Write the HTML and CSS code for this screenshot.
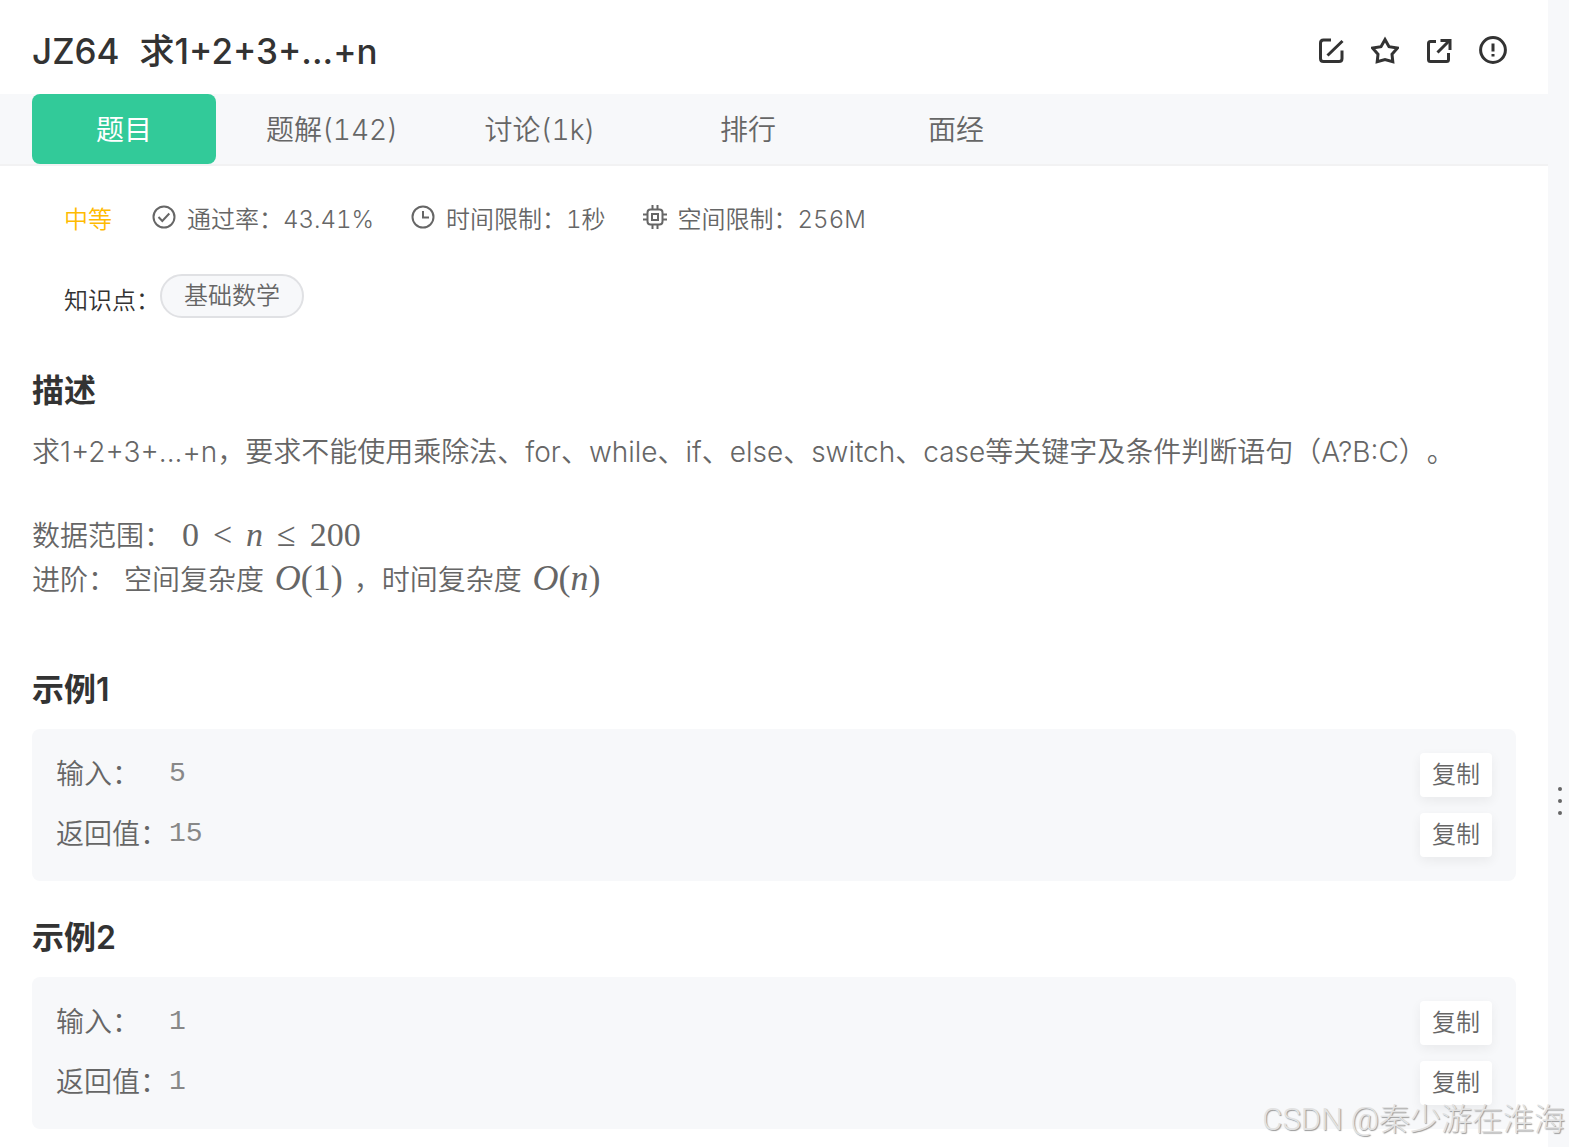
FILE: index.html
```html
<!DOCTYPE html>
<html lang="zh-CN">
<head>
<meta charset="utf-8">
<meta name="viewport" content="width=device-width, initial-scale=1">
<title>JZ64 求1+2+3+...+n</title>
<link rel="stylesheet" href="styles.css">
</head>
<body>
<div class="layout">
  <main class="panel">
    <header class="header">
      <h1 class="title"><span>JZ64</span><span>求1+2+3+...+n</span></h1>
      <div class="actions">
        <button class="action" type="button" aria-label="编辑">
          <svg viewBox="0 0 28 28"><path d="M14 4H6.500Q3.500 4 3.500 7v15.500q0 3 3 3H22q3 0 3-3V14.500M10.500 19.500L25.500 5"/></svg>
        </button>
        <button class="action" type="button" aria-label="收藏">
          <svg viewBox="0 0 28 28"><path d="M14 3.500l4 7.200 8.300 1.400-5.300 6.200 .8 7.500-7.800-2.300-7.800 2.300 .8-7.500-5.300-6.200L10 10.700z"/></svg>
        </button>
        <button class="action" type="button" aria-label="分享">
          <svg viewBox="0 0 28 28"><path d="M11 5.500H5.500Q3.500 5.500 3.500 7.500V23.500q0 2 2 2H21.500q2 0 2-2v-6.500M12.500 16.500L24 5"/><path d="M15.500 4.500H25V14"/></svg>
        </button>
        <button class="action" type="button" aria-label="反馈">
          <svg viewBox="0 0 28 28"><circle cx="14" cy="14" r="12.400"/><path d="M14 7.500v8M14 18v2.500"/></svg>
        </button>
      </div>
    </header>
    <nav class="tabs">
      <a class="tab tab-active" href="#problem">题目</a>
      <a class="tab" href="#solutions">题解(142)</a>
      <a class="tab" href="#discuss">讨论(1k)</a>
      <a class="tab" href="#rank">排行</a>
      <a class="tab" href="#interview">面经</a>
    </nav>
    <div class="meta">
      <span class="level">中等</span>
      <span class="meta-item"><svg viewBox="0 0 24 24"><circle cx="12" cy="12" r="10.500"/><path d="M6.500 12l3.800 4 7-7.500"/></svg>通过率：43.41%</span>
      <span class="meta-item"><svg viewBox="0 0 24 24"><circle cx="12" cy="12" r="10.500"/><path d="M12 6v6.500h6"/></svg>时间限制：1秒</span>
      <span class="meta-item"><svg viewBox="0 0 24 24"><rect x="4.500" y="4.500" width="15" height="15" rx="3"/><rect x="9" y="9" width="6" height="6"/><path d="M9.500 0v4M14.500 0v4M9.500 20v4M14.500 20v4M0 9.500h4M0 14.500h4M20 9.500h4M20 14.500h4"/></svg>空间限制：256M</span>
    </div>
    <div class="topics">
      <span>知识点：</span>
      <a class="tag" href="#math">基础数学</a>
    </div>
    <section class="section">
      <h2 class="heading">描述</h2>
      <div class="prose">
        <p>求1+2+3+...+n，要求不能使用乘除法、for、while、if、else、switch、case等关键字及条件判断语句（A?B:C）。</p>
        <p class="range">数据范围： <span class="formula"><span>0</span><span>&lt;</span><i>n</i><span>≤</span><span>200</span></span></p>
        <p class="range">进阶： 空间复杂度 <span class="math"><i>O</i>(1)</span> ，时间复杂度 <span class="math"><i>O</i>(<i>n</i>)</span></p>
      </div>
    </section>
    <section class="section">
      <h2 class="heading">示例1</h2>
      <div class="sample">
        <div class="row"><span class="label">输入：</span><code class="value">5</code><button class="copy" type="button">复制</button></div>
        <div class="row"><span class="label">返回值：</span><code class="value">15</code><button class="copy" type="button">复制</button></div>
      </div>
    </section>
    <section class="section">
      <h2 class="heading">示例2</h2>
      <div class="sample">
        <div class="row"><span class="label">输入：</span><code class="value">1</code><button class="copy" type="button">复制</button></div>
        <div class="row"><span class="label">返回值：</span><code class="value">1</code><button class="copy" type="button">复制</button></div>
      </div>
    </section>
  </main>
  <aside class="gutter"><span class="dot"></span><span class="dot"></span><span class="dot"></span></aside>
  <div class="watermark">CSDN @秦少游在淮海</div>
</div>
</body>
</html>
```
FILE: styles.css
```css
* {
  box-sizing: border-box;
}

body {
  margin: 0;
  background: #fff;
  color: #666;
  font-family: Inter, "Noto Sans CJK SC", sans-serif;
  font-weight: 350;
  font-size: 28px;
  text-spacing-trim: space-all;
}

h1, h2, p {
  margin: 0;
}

a {
  color: inherit;
  text-decoration: none;
}

button {
  padding: 0;
  border: 0;
  font: inherit;
  color: inherit;
  cursor: pointer;
}

svg {
  display: block;
  fill: none;
  stroke: currentColor;
  stroke-width: 2;
}

.layout {
  position: relative;
  display: flex;
  min-height: 100vh;
}

.panel {
  flex: 1;
  min-width: 0;
}

.header {
  display: flex;
  align-items: center;
  justify-content: space-between;
  height: 94px;
  padding: 8px 41px 0 32px;
  color: #333;
}

.title {
  display: flex;
  gap: 20px;
  font-size: 35px;
  font-weight: 500;
  line-height: 48px;
}

.actions {
  display: flex;
  gap: 26px;
  padding-bottom: 2px;
}

.action {
  width: 28px;
  height: 28px;
  background: none;
}

.action svg {
  stroke-width: 3;
}

.tabs {
  display: flex;
  gap: 24px;
  padding: 0 32px;
  background: #f7f8fa;
  border-bottom: 2px solid #f2f2f3;
  font-variant-numeric: tabular-nums;
}

.tab {
  width: 184px;
  height: 70px;
  border-radius: 8px;
  line-height: 72px;
  text-align: center;
}

.tab-active {
  background: #32ca99;
  color: #fff;
  font-weight: 400;
}

.meta {
  display: flex;
  align-items: center;
  gap: 37px;
  padding: 36px 64px 0;
  font-size: 24px;
  font-variant-numeric: tabular-nums;
  line-height: 36px;
}

.level {
  padding-right: 3px;
  color: #fb0;
}

.meta-item {
  display: flex;
  gap: 11px;
}

.meta-item svg {
  width: 24px;
  height: 24px;
  margin-top: 3px;
}

.topics {
  display: flex;
  align-items: flex-start;
  padding: 36px 64px 0;
  font-size: 24px;
  line-height: 40px;
  color: #333;
}

.topics > span {
  padding-top: 7px;
}

.tag {
  padding: 0 22px;
  border: 2px solid #e0e1e4;
  border-radius: 22px;
  background: #f7f8fa;
  color: #666;
}

.section {
  padding: 0 32px;
}

.heading {
  padding: 33px 0 15px;
  color: #333;
  font-size: 32px;
  font-weight: 600;
  line-height: 48px;
}

.topics + .section .heading {
  padding: 46px 0 15px;
}

.prose {
  padding-bottom: 31px;
  line-height: 44px;
}

.prose p:first-child {
  padding-bottom: 40px;
}

.range {
  height: 44px;
}

.math,
.formula {
  font-family: "Liberation Serif", serif;
  line-height: 40px;
}

.math {
  margin: 0 3px;
  font-size: 36px;
}

.formula {
  display: inline-flex;
  gap: 14px;
  margin-left: 2px;
  font-size: 34px;
}

.sample {
  display: flex;
  flex-direction: column;
  gap: 16px;
  padding: 24px;
  border-radius: 8px;
  background: #f7f8fa;
}

.row {
  display: flex;
  align-items: flex-start;
  height: 44px;
  line-height: 42px;
}

.label {
  width: 113px;
  white-space: nowrap;
}

.value {
  flex: 1;
  color: #888;
  font-family: "Liberation Mono", monospace;
  font-size: 28px;
}

.copy {
  width: 72px;
  height: 44px;
  border-radius: 4px;
  background: #fff;
  box-shadow: 0 4px 12px rgba(0, 0, 0, 0.06);
  font-size: 24px;
}

.gutter {
  display: flex;
  flex-direction: column;
  align-items: center;
  gap: 8px;
  width: 21px;
  padding: calc(70vh - 16px) 0 0 3px;
  background: #f7f8fa;
}

.dot {
  width: 4px;
  height: 4px;
  border-radius: 50%;
  background: #666;
}

.watermark {
  position: absolute;
  right: 4px;
  bottom: 3px;
  color: #e2e2e2;
  font-family: Roboto, "Noto Sans CJK SC", sans-serif;
  font-size: 31px;
  font-weight: 300;
  line-height: 48px;
  text-shadow: 1px 1px 1px #999;
}
```
